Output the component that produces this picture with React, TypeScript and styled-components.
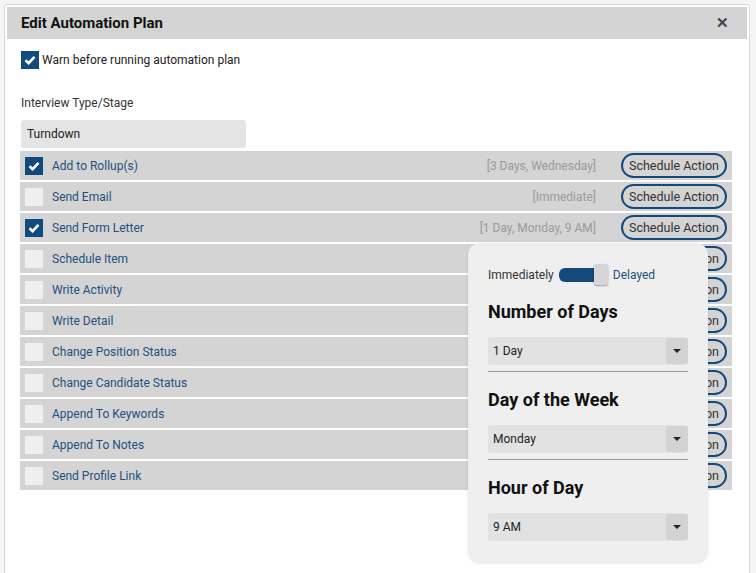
import styled, { createGlobalStyle } from "styled-components";

const GlobalStyle = createGlobalStyle`
  body {
    margin: 0;
    background: #f5f5f5;
    font-family: Roboto, "Liberation Sans", sans-serif;
    color: #333;
  }
`;

const Dialog = styled.div`
  position: relative;
  margin: 4px 6px 0 4px;
  height: 580px;
  background: #fff;
  border: 1px solid #d6d6d6;
  border-radius: 3px;
  padding: 2px;
  box-sizing: border-box;
`;

const Header = styled.div`
  display: flex;
  align-items: center;
  justify-content: space-between;
  height: 32px;
  background: #d4d4d4;
  padding: 0 18px 0 14px;
`;

const Title = styled.h1`
  margin: 0;
  font-size: 15px;
  font-weight: 700;
  color: #111;
`;

const Close = styled.span`
  font-size: 15px;
  font-weight: 700;
  color: #444;
  line-height: 1;
`;

const Body = styled.div`
  padding: 12px 15px 0 13px;
`;

const WarnRow = styled.label`
  display: flex;
  align-items: center;
  gap: 3px;
  margin-left: 1px;
  font-size: 12px;
  color: #222;
`;

const Box = styled.span<{ $checked?: boolean }>`
  display: inline-flex;
  align-items: center;
  justify-content: center;
  width: 18px;
  height: 18px;
  flex-shrink: 0;
  background: ${(p) => (p.$checked ? "#124a7e" : "#efefef")};
`;

const FieldLabel = styled.div`
  margin: 26px 0 0 1px;
  font-size: 12px;
  color: #333;
  line-height: 16px;
`;

const Input = styled.div`
  margin: 9px 0 0 1px;
  width: 225px;
  height: 28px;
  background: #e4e4e4;
  border-radius: 3px;
  display: flex;
  align-items: center;
  padding-left: 6px;
  box-sizing: border-box;
  font-size: 12px;
  color: #222;
`;

const List = styled.div`
  margin-top: 3px;
  display: flex;
  flex-direction: column;
  gap: 2px;
`;

const Row = styled.div`
  display: flex;
  align-items: center;
  height: 29px;
  background: #d4d4d4;
  padding: 0 5px;
`;

const RowLabel = styled.span`
  margin-left: 9px;
  font-size: 12px;
  color: #24507c;
  flex: 1;
`;

const When = styled.span`
  font-size: 12px;
  color: #9a9a9a;
  margin-right: 25px;
`;

const ScheduleButton = styled.button`
  width: 106px;
  height: 25px;
  border: 2px solid #14497d;
  border-radius: 13px;
  background: transparent;
  font-family: inherit;
  font-size: 12.5px;
  color: #333;
  padding: 0;
`;

const Popover = styled.div`
  position: absolute;
  left: 463px;
  top: 238px;
  width: 240px;
  height: 319px;
  background: #efefef;
  border-radius: 12px;
  box-shadow: 0 1px 3px rgba(0, 0, 0, 0.12);
  padding: 19px 20px 0;
  box-sizing: border-box;
`;

const ToggleRow = styled.div`
  display: flex;
  align-items: center;
  height: 26px;
  font-size: 12px;
`;

const ToggleText = styled.span<{ $active?: boolean }>`
  color: ${(p) => (p.$active ? "#24507c" : "#333")};
`;

const Track = styled.span`
  position: relative;
  display: inline-block;
  width: 44px;
  height: 14px;
  margin: 0 10px 0 5px;
  background: #14497d;
  border-radius: 6px;
`;

const Thumb = styled.span`
  position: absolute;
  right: -5px;
  top: -4px;
  width: 14px;
  height: 21px;
  background: #d6d6d6;
  border-radius: 3px;
  box-shadow: 0 1px 2px rgba(0, 0, 0, 0.35);
`;

const SectionTitle = styled.h2`
  margin: 0;
  font-size: 18px;
  font-weight: 700;
  color: #111;
  line-height: 22px;
`;

const Section = styled.div<{ $first?: boolean }>`
  padding-top: ${(p) => (p.$first ? "13px" : "17px")};
`;

const Select = styled.div`
  margin-top: 14px;
  display: flex;
  height: 28px;
  background: #e2e2e2;
  border-radius: 3px;
  font-size: 12px;
  color: #222;
`;

const SelectValue = styled.span`
  flex: 1;
  display: flex;
  align-items: center;
  padding-left: 5px;
`;

const Caret = styled.span`
  width: 22px;
  margin: 1px 0;
  background: #d3d3d3;
  border-radius: 2px;
  display: flex;
  align-items: center;
  justify-content: center;
  &::after {
    content: "";
    border-left: 4px solid transparent;
    border-right: 4px solid transparent;
    border-top: 4px solid #222;
  }
`;

const Divider = styled.hr`
  margin: 6px 0 0;
  border: 0;
  border-top: 1px solid #9a9a9a;
`;

const Check = () => (
  <svg width="12" height="10" viewBox="0 0 12 10">
    <path d="M1.5 5.2 L4.6 8.2 L10.5 1.8" stroke="#fff" strokeWidth="2.6" fill="none" />
  </svg>
);

const actions = [
  { name: "Add to Rollup(s)", checked: true, when: "[3 Days, Wednesday]" },
  { name: "Send Email", checked: false, when: "[Immediate]" },
  { name: "Send Form Letter", checked: true, when: "[1 Day, Monday, 9 AM]" },
  { name: "Schedule Item", checked: false, when: "" },
  { name: "Write Activity", checked: false, when: "" },
  { name: "Write Detail", checked: false, when: "" },
  { name: "Change Position Status", checked: false, when: "" },
  { name: "Change Candidate Status", checked: false, when: "" },
  { name: "Append To Keywords", checked: false, when: "" },
  { name: "Append To Notes", checked: false, when: "" },
  { name: "Send Profile Link", checked: false, when: "" },
];

const sections = [
  { title: "Number of Days", value: "1 Day" },
  { title: "Day of the Week", value: "Monday" },
  { title: "Hour of Day", value: "9 AM" },
];

function App() {
  return (
    <>
      <GlobalStyle />
      <Dialog>
        <Header>
          <Title>Edit Automation Plan</Title>
          <Close>✕</Close>
        </Header>
        <Body>
          <WarnRow>
            <Box $checked>
              <Check />
            </Box>
            Warn before running automation plan
          </WarnRow>
          <FieldLabel>Interview Type/Stage</FieldLabel>
          <Input>Turndown</Input>
          <List>
            {actions.map((a) => (
              <Row key={a.name}>
                <Box $checked={a.checked}>{a.checked && <Check />}</Box>
                <RowLabel>{a.name}</RowLabel>
                {a.when && <When>{a.when}</When>}
                <ScheduleButton>Schedule Action</ScheduleButton>
              </Row>
            ))}
          </List>
        </Body>
        <Popover>
          <ToggleRow>
            <ToggleText>Immediately</ToggleText>
            <Track>
              <Thumb />
            </Track>
            <ToggleText $active>Delayed</ToggleText>
          </ToggleRow>
          {sections.map((s, i) => (
            <Section key={s.title} $first={i === 0}>
              <SectionTitle>{s.title}</SectionTitle>
              <Select>
                <SelectValue>{s.value}</SelectValue>
                <Caret />
              </Select>
              {i < sections.length - 1 && <Divider />}
            </Section>
          ))}
        </Popover>
      </Dialog>
    </>
  );
}

export default App;
